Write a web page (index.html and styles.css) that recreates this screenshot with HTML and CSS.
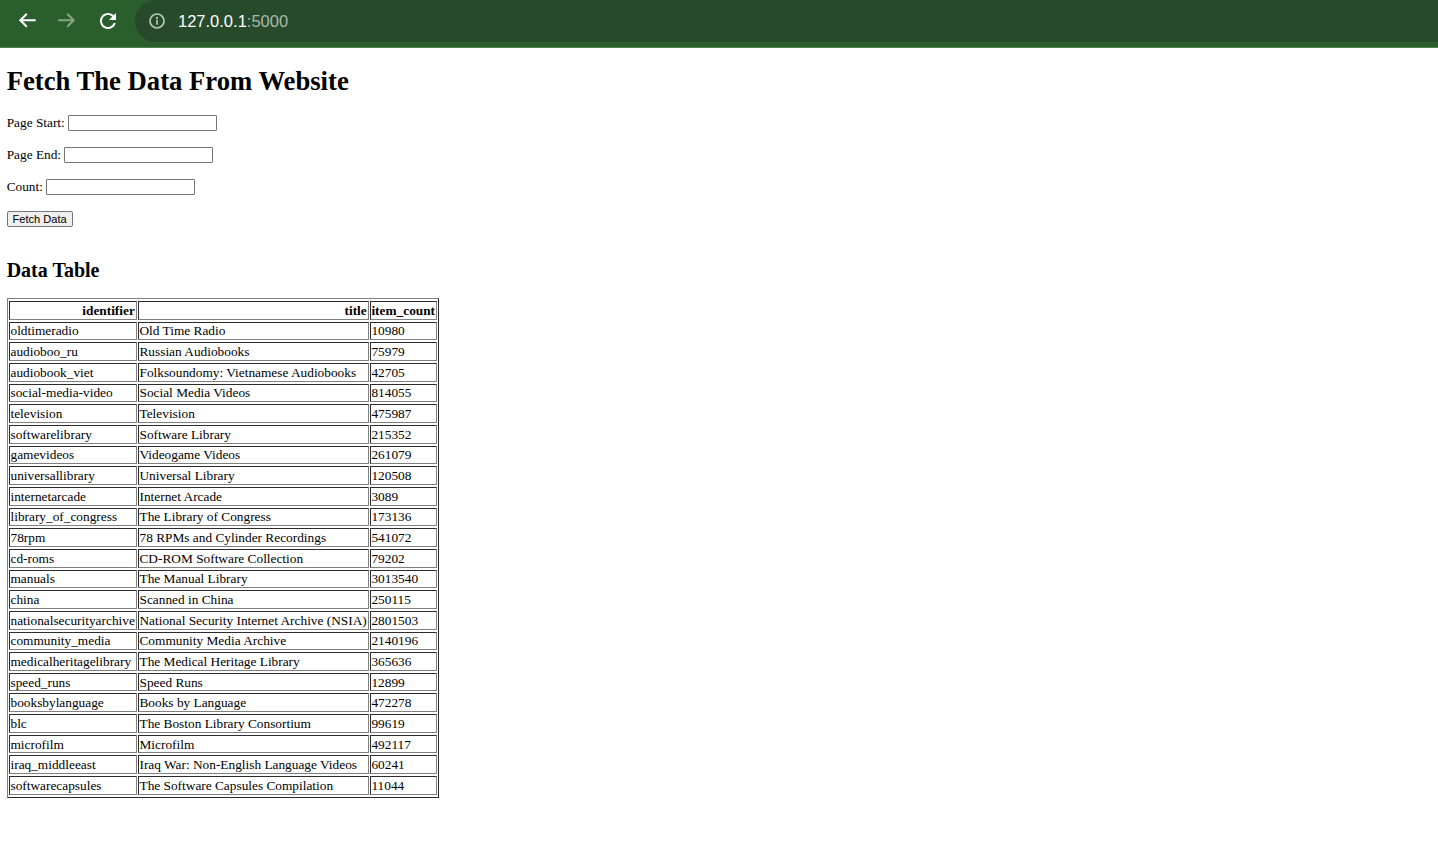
FILE: index.html
```html
<!DOCTYPE html>
<html lang="en">
<head>
<meta charset="utf-8">
<title>Fetch The Data From Website</title>
<link rel="stylesheet" href="styles.css">
</head>
<body>
<div class="chrome">
  <div class="nav">
    <svg class="nav-icon" width="20" height="20" viewBox="0 0 20 20"><path d="M18.7 10.3H3.4M9.8 3.8L3.3 10.3 9.8 16.8" fill="none" stroke="#ffffff" stroke-width="2"/></svg>
    <svg class="nav-icon" width="20" height="20" viewBox="0 0 20 20"><path d="M1.3 10.3H16.6M10.2 3.8L16.7 10.3 10.2 16.8" fill="none" stroke="#86a687" stroke-width="2"/></svg>
    <svg class="nav-icon" width="20" height="20" viewBox="1 1 20 20"><path d="M17.65 6.35C16.2 4.9 14.21 4 12 4c-4.42 0-7.99 3.58-7.99 8s3.57 8 7.99 8c3.73 0 6.84-2.55 7.73-6h-2.08c-.82 2.33-3.04 4-5.65 4-3.31 0-6-2.69-6-6s2.69-6 6-6c1.66 0 3.14.69 4.22 1.78L13 11h7V4l-2.35 2.35z" fill="#ffffff"/></svg>
  </div>
  <div class="omnibox">
    <svg class="info-icon" width="16" height="16" viewBox="0 0 16 16"><circle cx="8" cy="8" r="7" fill="none" stroke="#b8c5b9" stroke-width="1.7"/><circle cx="8" cy="4.9" r="1.05" fill="#b8c5b9"/><rect x="7.15" y="6.7" width="1.7" height="5" fill="#b8c5b9"/></svg>
    <span class="url"><span class="host">127.0.0.1</span><span class="port">:5000</span></span>
  </div>
</div>
<main class="page">
  <h1 class="title">Fetch The Data From Website</h1>
  <form class="form">
    <p class="row"><label class="label" for="ps">Page Start:</label><input class="field" id="ps" type="text"></p>
    <p class="row"><label class="label" for="pe">Page End:</label><input class="field" id="pe" type="text"></p>
    <p class="row"><label class="label" for="ct">Count:</label><input class="field" id="ct" type="text"></p>
    <p class="row"><button class="btn" type="button">Fetch Data</button></p>
  </form>
  <h2 class="subtitle">Data Table</h2>
  <table class="dataframe">
    <thead>
      <tr class="head-row"><th>identifier</th><th>title</th><th>item_count</th></tr>
    </thead>
    <tbody>
      <tr><td>oldtimeradio</td><td>Old Time Radio</td><td>10980</td></tr>
      <tr><td>audioboo_ru</td><td>Russian Audiobooks</td><td>75979</td></tr>
      <tr><td>audiobook_viet</td><td>Folksoundomy: Vietnamese Audiobooks</td><td>42705</td></tr>
      <tr><td>social-media-video</td><td>Social Media Videos</td><td>814055</td></tr>
      <tr><td>television</td><td>Television</td><td>475987</td></tr>
      <tr><td>softwarelibrary</td><td>Software Library</td><td>215352</td></tr>
      <tr><td>gamevideos</td><td>Videogame Videos</td><td>261079</td></tr>
      <tr><td>universallibrary</td><td>Universal Library</td><td>120508</td></tr>
      <tr><td>internetarcade</td><td>Internet Arcade</td><td>3089</td></tr>
      <tr><td>library_of_congress</td><td>The Library of Congress</td><td>173136</td></tr>
      <tr><td>78rpm</td><td>78 RPMs and Cylinder Recordings</td><td>541072</td></tr>
      <tr><td>cd-roms</td><td>CD-ROM Software Collection</td><td>79202</td></tr>
      <tr><td>manuals</td><td>The Manual Library</td><td>3013540</td></tr>
      <tr><td>china</td><td>Scanned in China</td><td>250115</td></tr>
      <tr><td>nationalsecurityarchive</td><td>National Security Internet Archive (NSIA)</td><td>2801503</td></tr>
      <tr><td>community_media</td><td>Community Media Archive</td><td>2140196</td></tr>
      <tr><td>medicalheritagelibrary</td><td>The Medical Heritage Library</td><td>365636</td></tr>
      <tr><td>speed_runs</td><td>Speed Runs</td><td>12899</td></tr>
      <tr><td>booksbylanguage</td><td>Books by Language</td><td>472278</td></tr>
      <tr><td>blc</td><td>The Boston Library Consortium</td><td>99619</td></tr>
      <tr><td>microfilm</td><td>Microfilm</td><td>492117</td></tr>
      <tr><td>iraq_middleeast</td><td>Iraq War: Non-English Language Videos</td><td>60241</td></tr>
      <tr><td>softwarecapsules</td><td>The Software Capsules Compilation</td><td>11044</td></tr>
    </tbody>
  </table>
</main>
</body>
</html>
```

FILE: styles.css
```css
html, body {
  margin: 0;
  padding: 0;
  background: #ffffff;
}

body {
  font-family: "Liberation Serif", "Times New Roman", serif;
  font-size: 13.33px;
  color: #000000;
}

/* browser chrome */
.chrome {
  display: flex;
  height: 47px;
  background: #2b5e2d;
  border-bottom: 1px solid #4d8150;
}

.nav {
  display: flex;
  align-items: flex-start;
  gap: 20px;
  width: 118px;
  padding: 10px 0 0 17px;
}

.nav-icon {
  display: block;
  flex: none;
}

.omnibox {
  flex: 1;
  display: flex;
  align-items: center;
  gap: 13px;
  height: 42px;
  padding-left: 14px;
  background: #264a2a;
  border-radius: 21px 0 0 21px;
}

.info-icon {
  display: block;
  flex: none;
}

.url {
  font-family: "Liberation Sans", Arial, sans-serif;
  font-size: 16.5px;
  line-height: 19px;
  white-space: nowrap;
}

.host {
  color: #ffffff;
}

.port {
  color: #a9b8aa;
}

/* page */
.page {
  padding: 0 6.67px;
}

.title {
  font-size: 26.67px;
  line-height: 31px;
  font-weight: bold;
  margin: 17.5px 0 18.5px;
}

.form {
  margin: 0;
}

.row {
  display: flex;
  align-items: center;
  gap: 3.33px;
  height: 16px;
  margin: 0 0 16px;
  line-height: 15.33px;
}

.row:last-child {
  margin-bottom: 0;
}

.label {
  white-space: nowrap;
}

.field {
  box-sizing: border-box;
  width: 149px;
  height: 16px;
  margin: 0;
  padding: 0 2px;
  border: 1px solid #767676;
  border-radius: 1px;
  background: #ffffff;
  font-family: "Liberation Sans", Arial, sans-serif;
  font-size: 11px;
}

.btn {
  box-sizing: border-box;
  width: 66px;
  height: 16px;
  margin: 0;
  padding: 0;
  border: 1px solid #767676;
  border-radius: 2px;
  background: #efefef;
  color: #000000;
  font-family: "Liberation Sans", Arial, sans-serif;
  font-size: 11.1px;
  line-height: 14px;
}

.subtitle {
  font-size: 20px;
  line-height: 23px;
  font-weight: bold;
  margin: 32px 0 16px;
}

.dataframe {
  border-collapse: separate;
  border-spacing: 1px 2px;
  border: 1px outset gray;
  font-size: 13.33px;
  line-height: 15px;
}

.dataframe th,
.dataframe td {
  padding: 0.83px;
  border: 1px inset gray;
  white-space: nowrap;
}

.dataframe td {
  text-align: left;
}

.head-row th {
  text-align: right;
  font-weight: bold;
}
```
